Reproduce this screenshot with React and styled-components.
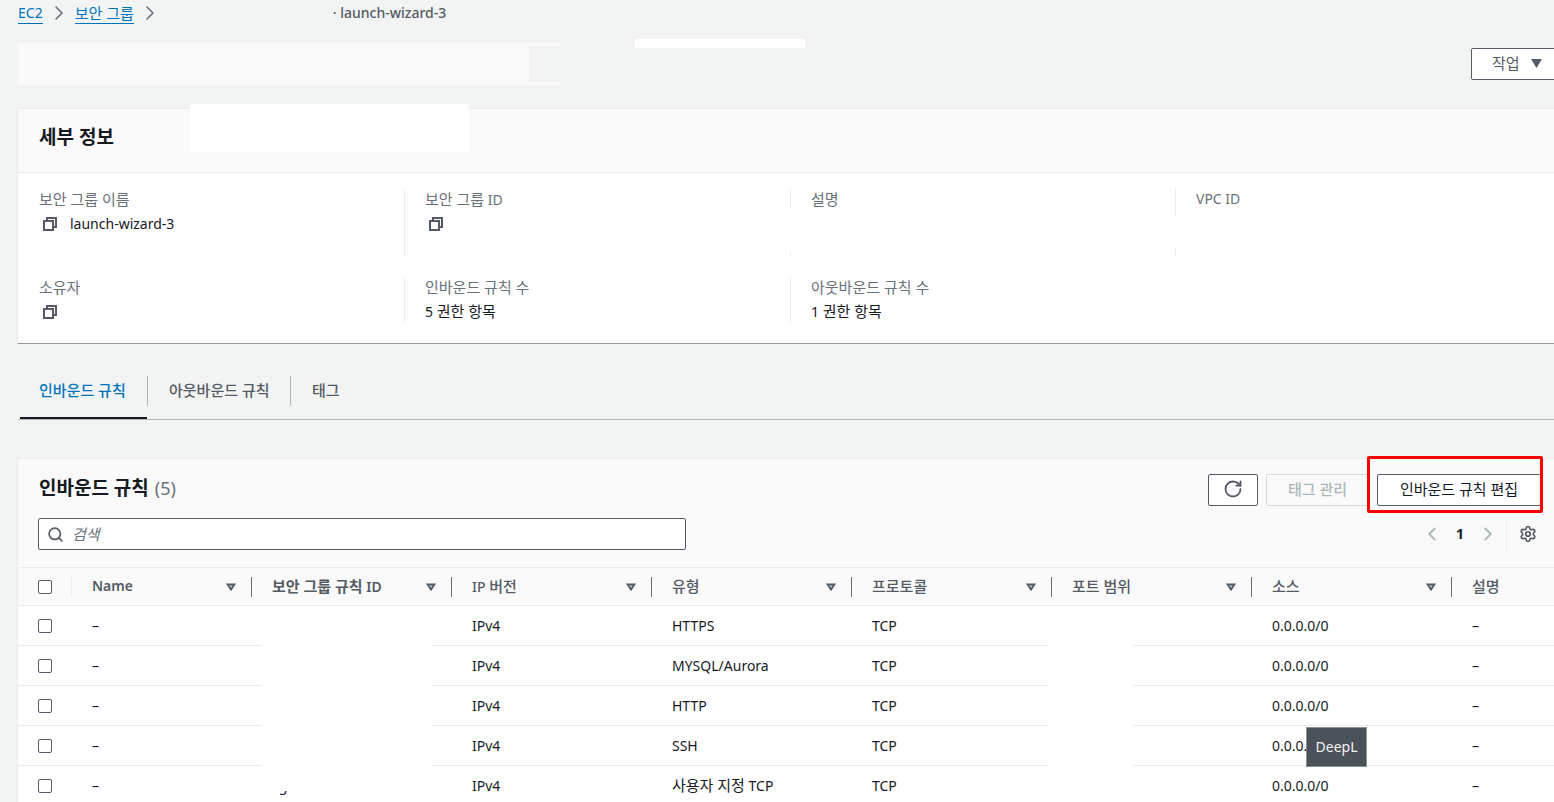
import React from "react";
import styled, { createGlobalStyle } from "styled-components";
import { ChevronLeft, ChevronRight, RotateCw, Search, Settings } from "lucide-react";

const Global = createGlobalStyle`
  html, body { margin: 0; padding: 0; background: #f2f3f3; }
  body { font-family: "Noto Sans", "Noto Sans CJK KR", sans-serif; font-size: 14px; line-height: 20px; color: #16191f; }
  * { box-sizing: border-box; }
`;

const Page = styled.div`
  position: relative;
  width: 1554px;
  height: 802px;
  overflow: hidden;
  background: #f2f3f3;
`;

const Ko = styled.span`
  font-size: 15px;
  line-height: 20px;
`;

const Crumbs = styled.nav`
  display: flex;
  align-items: center;
  height: 26px;
  padding-left: 18px;
`;
const CrumbLink = styled.a`
  color: #0073bb;
  border-bottom: 1px solid #0073bb;
  height: 22px;
  padding-top: 1px;
`;
const CrumbSep = styled.span`
  display: flex;
  width: 32px;
  justify-content: center;
  color: #687078;
`;
const CrumbCurrent = styled.span`
  margin-left: 167px;
  color: #545b64;
  font-weight: 500;
`;

const HeadRow = styled.div`
  display: flex;
  justify-content: flex-end;
  height: 82px;
  padding-top: 22px;
`;
const ActionBtn = styled.button`
  display: flex;
  align-items: center;
  gap: 11px;
  width: 90px;
  height: 32px;
  margin-right: -7px;
  padding: 0 0 2px 20px;
  background: #fff;
  border: 1px solid #545b64;
  border-radius: 2px;
  color: #545b64;
  font: inherit;
`;
const SolidCaret = styled.svg`
  width: 11px;
  height: 9px;
  fill: #545b64;
`;

const Card = styled.section`
  width: 1560px;
  margin-left: 17px;
  background: #fff;
  border: 1px solid #eaeded;
  border-bottom: 1px solid #8d9798;
  border-right: 0;
`;
const CardHead = styled.header`
  display: flex;
  align-items: center;
  height: 64px;
  padding-left: 21px;
  padding-bottom: 8px;
  background: #fafafa;
  border-bottom: 1px solid #eaeded;
`;
const CardTitle = styled.h2`
  margin: 0;
  font-size: 19px;
  line-height: 24px;
  font-weight: 700;
  color: #16191f;
`;
const Details = styled.div`
  display: grid;
  grid-template-columns: 386px 386px 385px 1fr;
  grid-template-rows: 68px 46px;
  row-gap: 20px;
  padding: 16px 0 20px;
`;
const Field = styled.div`
  padding-left: ${(p) => (p.$first ? "21px" : "20px")};
  border-left: ${(p) => (p.$first ? "0" : "1px solid #eaeded")};
`;
const FieldLabel = styled.div`
  height: 20px;
  color: #687078;
`;
const FieldValue = styled.div`
  display: flex;
  align-items: center;
  gap: 12px;
  height: 20px;
  margin-top: 5px;
  color: #16191f;
`;
const CountValue = styled.div`
  height: 20px;
  margin-top: 4px;
  color: #16191f;
`;
const CopySvg = styled.svg`
  width: 16px;
  height: 16px;
  margin-left: 3px;
  fill: none;
  stroke: #545b64;
  stroke-width: 2;
`;

const Tabs = styled.div`
  display: flex;
  align-items: flex-start;
  height: 44px;
  margin-top: 32px;
  margin-left: 18px;
  border-bottom: 1px solid #aab7b8;
`;
const Tab = styled.div`
  position: relative;
  width: ${(p) => p.$w}px;
  height: 43px;
  padding-left: ${(p) => p.$pad}px;
  padding-top: 4px;
  font-weight: 500;
  color: ${(p) => (p.$active ? "#0073bb" : "#545b64")};
  &::before {
    content: "";
    display: ${(p) => (p.$active ? "block" : "none")};
    position: absolute;
    left: 2px;
    right: 0;
    bottom: 0;
    height: 2px;
    background: #16191f;
  }
`;
const TabSep = styled.div`
  width: 1px;
  height: 30px;
  background: #aab7b8;
`;

const RulesCard = styled(Card)`
  margin-top: 38px;
  border-bottom: 0;
  background: #fafafa;
`;
const RulesTop = styled.div`
  display: flex;
  align-items: flex-start;
  justify-content: space-between;
  height: 59px;
  padding: 15px 36px 0 21px;
`;
const RulesTitle = styled.h2`
  margin: 0;
  font-size: 19px;
  line-height: 28px;
  font-weight: 700;
`;
const Count = styled.span`
  margin-left: 6px;
  font-size: 18px;
  font-weight: 400;
  color: #687078;
`;
const Tools = styled.div`
  display: flex;
  gap: 8px;
`;
const Btn = styled.button`
  display: flex;
  align-items: center;
  justify-content: center;
  width: ${(p) => p.$w}px;
  height: 32px;
  padding: 0 0 2px;
  background: ${(p) => (p.$disabled ? "#fafafa" : "#fff")};
  border: 1px solid ${(p) => (p.$disabled ? "#d5dbdb" : "#545b64")};
  border-radius: 2px;
  color: ${(p) => (p.$disabled ? "#aab7b8" : "#545b64")};
  font: inherit;
  font-weight: 500;
`;
const EditBtn = styled(Btn)`
  color: #16191f;
  font-weight: 400;
`;
const RulesSub = styled.div`
  display: flex;
  align-items: center;
  justify-content: space-between;
  height: 49px;
  padding: 0 40px 17px 20px;
`;
const SearchBox = styled.div`
  display: flex;
  align-items: center;
  gap: 8px;
  width: 648px;
  height: 32px;
  padding-left: 8px;
  background: #fff;
  border: 1px solid #545b64;
  border-radius: 2px;
`;
const SearchText = styled.span`
  color: #687078;
  font-style: italic;
`;
const Pager = styled.div`
  display: flex;
  align-items: center;
  height: 32px;
  color: #aab7b8;
`;
const PageNum = styled.span`
  width: 34px;
  text-align: center;
  color: #16191f;
  font-weight: 700;
`;
const PagerSep = styled.div`
  width: 1px;
  height: 32px;
  margin: 0 12px 0 7px;
  background: #eaeded;
`;

const Row = styled.div`
  display: grid;
  grid-template-columns: 54px 180px repeat(6, 200px) 1fr;
  height: ${(p) => (p.$head ? "39px" : "40px")};
  background: ${(p) => (p.$head ? "#fafafa" : "#fff")};
  border-top: ${(p) => (p.$head ? "1px solid #eaeded" : "0")};
  border-bottom: 1px solid #eaeded;
`;
const CheckCell = styled.div`
  display: flex;
  align-items: center;
  padding-left: 20px;
`;
const HeadCheckCell = styled(CheckCell)`
  &::after {
    content: "";
    width: 1px;
    height: 20px;
    margin-left: 19px;
    background: #eaeded;
  }
`;
const Box = styled.span`
  width: 14px;
  height: 14px;
  background: #fff;
  border: 1px solid #545b64;
  border-radius: 2px;
`;
const HeadCell = styled.div`
  display: flex;
  align-items: center;
  padding-left: 20px;
  color: #545b64;
  font-weight: ${(p) => (p.$bold ? 600 : 500)};
`;
const HeadLabel = styled.span`
  flex: 1;
  margin-top: -1px;
`;
const FilterCaret = styled.svg`
  width: 10px;
  height: 8px;
  margin-right: 15px;
  fill: #aab7b8;
  stroke: #545b64;
  stroke-width: 2;
`;
const HeadSep = styled.span`
  width: 1px;
  height: 20px;
  background: #687078;
`;
const Cell = styled.div`
  display: flex;
  align-items: center;
  gap: 4px;
  padding: 0 0 0 20px;
  color: #16191f;
  white-space: nowrap;
`;

const Patch = styled.div`
  position: absolute;
  left: ${(p) => p.$x}px;
  top: ${(p) => p.$y}px;
  width: ${(p) => p.$w}px;
  height: ${(p) => p.$h}px;
  background: ${(p) => p.$bg || "#fff"};
`;
const Highlight = styled.div`
  position: absolute;
  left: 1367px;
  top: 456px;
  width: 176px;
  height: 57px;
  border: 3px solid #ff0000;
  border-radius: 2px;
`;
const DeepL = styled.div`
  position: absolute;
  left: 1306px;
  top: 727px;
  width: 61px;
  height: 40px;
  background: #4b5159;
  border: 1px solid #8a9096;
  color: #f2f3f3;
  line-height: 38px;
  text-align: center;
`;

const CopyIcon = () => (
  <CopySvg viewBox="0 0 16 16">
    <rect x="2" y="5" width="9" height="9" />
    <path d="M5 5V2h9v9h-3" />
  </CopySvg>
);
const Caret = () => (
  <FilterCaret viewBox="0 0 11 9">
    <path d="M1.5 1.5h8L5.5 7.5z" />
  </FilterCaret>
);

const columns = [
  [<HeadLabel key="l">Name</HeadLabel>, "name", true],
  [<HeadLabel key="l"><Ko>보안 그룹 규칙</Ko> ID</HeadLabel>, "id", true],
  [<HeadLabel key="l">IP <Ko>버전</Ko></HeadLabel>, "ip"],
  [<HeadLabel key="l"><Ko>유형</Ko></HeadLabel>, "type"],
  [<HeadLabel key="l"><Ko>프로토콜</Ko></HeadLabel>, "proto"],
  [<HeadLabel key="l"><Ko>포트 범위</Ko></HeadLabel>, "port"],
  [<HeadLabel key="l"><Ko>소스</Ko></HeadLabel>, "src"],
];
const rows = [
  ["HTTPS", "HTTPS", "0.0.0.0/0"],
  ["MYSQL/Aurora", "MYSQL/Aurora", "0.0.0.0/0"],
  ["HTTP", "HTTP", "0.0.0.0/0"],
  ["SSH", "SSH", "0.0.0.0/0"],
  ["custom", <span key="c"><Ko>사용자 지정</Ko> TCP</span>, "0.0.0.0/0"],
];

export default function App() {
  return (
    <Page>
      <Global />
      <Crumbs>
        <CrumbLink>EC2</CrumbLink>
        <CrumbSep><ChevronRight size={24} strokeWidth={1.6} /></CrumbSep>
        <CrumbLink><Ko>보안 그룹</Ko></CrumbLink>
        <CrumbSep><ChevronRight size={24} strokeWidth={1.6} /></CrumbSep>
        <CrumbCurrent>· launch-wizard-3</CrumbCurrent>
      </Crumbs>
      <HeadRow>
        <ActionBtn>
          <Ko>작업</Ko>
          <SolidCaret viewBox="0 0 11 9"><path d="M0 0h11L5.5 9z" /></SolidCaret>
        </ActionBtn>
      </HeadRow>

      <Card>
        <CardHead><CardTitle>세부 정보</CardTitle></CardHead>
        <Details>
          <Field $first>
            <FieldLabel><Ko>보안 그룹 이름</Ko></FieldLabel>
            <FieldValue><CopyIcon />launch-wizard-3</FieldValue>
          </Field>
          <Field>
            <FieldLabel><Ko>보안 그룹</Ko> ID</FieldLabel>
            <FieldValue><CopyIcon /></FieldValue>
          </Field>
          <Field>
            <FieldLabel><Ko>설명</Ko></FieldLabel>
          </Field>
          <Field>
            <FieldLabel>VPC ID</FieldLabel>
          </Field>
          <Field $first>
            <FieldLabel><Ko>소유자</Ko></FieldLabel>
            <FieldValue><CopyIcon /></FieldValue>
          </Field>
          <Field>
            <FieldLabel><Ko>인바운드 규칙 수</Ko></FieldLabel>
            <CountValue>5 <Ko>권한 항목</Ko></CountValue>
          </Field>
          <Field>
            <FieldLabel><Ko>아웃바운드 규칙 수</Ko></FieldLabel>
            <CountValue>1 <Ko>권한 항목</Ko></CountValue>
          </Field>
        </Details>
      </Card>

      <Tabs>
        <Tab $active $w={129} $pad={21}><Ko>인바운드 규칙</Ko></Tab>
        <TabSep />
        <Tab $w={142} $pad={21}><Ko>아웃바운드 규칙</Ko></Tab>
        <TabSep />
        <Tab $w={100} $pad={21}><Ko>태그</Ko></Tab>
      </Tabs>

      <RulesCard>
        <RulesTop>
          <RulesTitle>인바운드 규칙<Count>(5)</Count></RulesTitle>
          <Tools>
            <Btn $w={50}><RotateCw size={20} strokeWidth={2.2} /></Btn>
            <Btn $w={103} $disabled><Ko>태그 관리</Ko></Btn>
            <EditBtn $w={164}><Ko>인바운드 규칙 편집</Ko></EditBtn>
          </Tools>
        </RulesTop>
        <RulesSub>
          <SearchBox>
            <Search size={17} strokeWidth={2.4} color="#545b64" />
            <SearchText><Ko>검색</Ko></SearchText>
          </SearchBox>
          <Pager>
            <ChevronLeft size={22} strokeWidth={2} />
            <PageNum>1</PageNum>
            <ChevronRight size={22} strokeWidth={2} />
            <PagerSep />
            <Settings size={18} strokeWidth={2.2} color="#545b64" />
          </Pager>
        </RulesSub>
        <Row $head>
          <HeadCheckCell><Box /></HeadCheckCell>
          {columns.map(([label, key, bold]) => (
            <HeadCell key={key} $bold={bold}>
              {label}
              <Caret />
              <HeadSep />
            </HeadCell>
          ))}
          <HeadCell><HeadLabel><Ko>설명</Ko></HeadLabel></HeadCell>
        </Row>
        {rows.map(([key, type, source]) => (
          <Row key={key}>
            <CheckCell><Box /></CheckCell>
            <Cell>–</Cell>
            <Cell>sgr-0a1b2c3d4e5f6a7b8</Cell>
            <Cell>IPv4</Cell>
            <Cell>{type}</Cell>
            <Cell>TCP</Cell>
            <Cell />
            <Cell>{source}</Cell>
            <Cell>–</Cell>
          </Row>
        ))}
      </RulesCard>

      <Patch $x={18} $y={43} $w={542} $h={42} $bg="#fafafa" />
      <Patch $x={529} $y={46} $w={31} $h={36} $bg="#f2f3f3" />
      <Patch $x={635} $y={39} $w={170} $h={9} />
      <Patch $x={190} $y={104} $w={279} $h={48} />
      <Patch $x={790} $y={209} $w={96} $h={42} />
      <Patch $x={1175} $y={216} $w={2} $h={32} />
      <Patch $x={262} $y={606} $w={170} $h={185} />
      <Patch $x={1048} $y={606} $w={85} $h={196} />
      <Highlight />
      <DeepL>DeepL</DeepL>
    </Page>
  );
}
